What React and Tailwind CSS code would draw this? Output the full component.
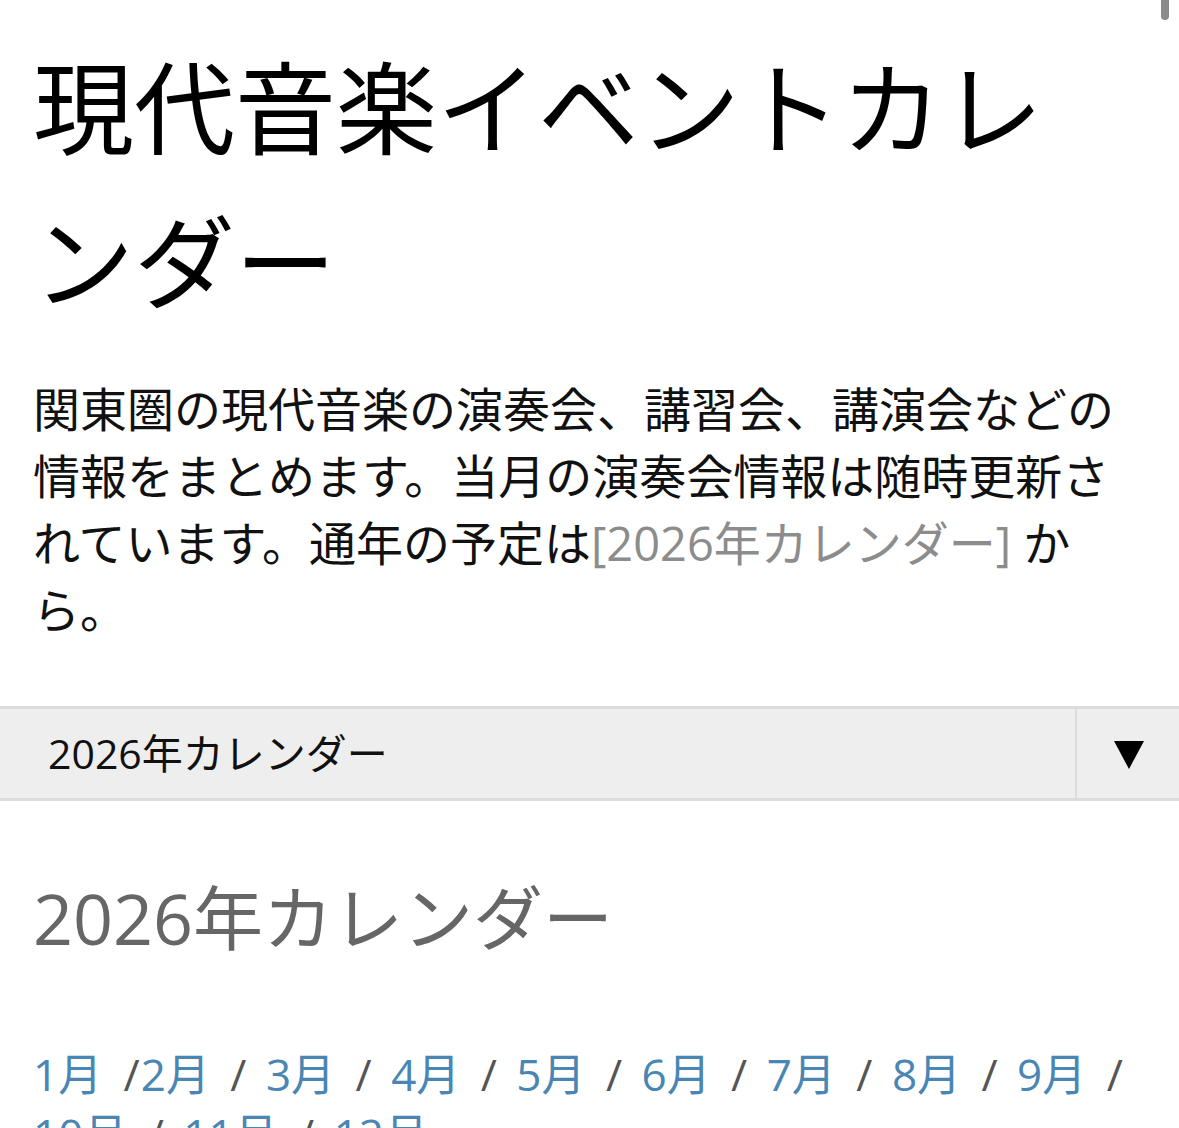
import React from "react";

const months = ["1月", "2月", "3月", "4月", "5月", "6月", "7月", "8月", "9月", "10月", "11月", "12月"];

const App = () => {
  return (
    <div
      className="relative min-h-screen bg-white text-black"
      style={{ fontFamily: '"Open Sans", "Noto Sans CJK JP", sans-serif' }}
    >
      {/* scroll indicator */}
      <div className="absolute right-[10px] top-0 h-[20px] w-[8px] rounded-b-full bg-[#8a8a8a]" />

      <div className="px-[33px] pt-[31px]">
        <h1 className="max-w-[1090px] text-[101px] leading-[154px] font-normal">
          現代音楽イベントカレンダー
        </h1>

        <p className="mt-[37px] text-[47px] leading-[67px] text-[#111]">
          関東圏の現代音楽の演奏会、講習会、講演会などの情報をまとめます。当月の演奏会情報は随時更新されています。通年の予定は
          <a href="#cal" className="text-[#8c8c8c]">[2026年カレンダー]</a> から。
        </p>
      </div>

      {/* year selector */}
      <div className="mt-[62px] flex h-[95px] border-y-[3px] border-[#dcdcdc] bg-[#eeeeee]">
        <div className="flex flex-1 items-center pl-[48px] text-[41px] text-[#111]">
          2026年カレンダー
        </div>
        <div className="flex w-[104px] items-center justify-center border-l-2 border-[#dcdcdc] pl-[2px]">
          <svg width="30" height="30" viewBox="0 0 30 30">
            <path d="M0 2 H30 L15 30 Z" fill="#000" />
          </svg>
        </div>
      </div>

      <div className="px-[33px]">
        <h2 id="cal" className="mt-[67px] text-[70px] leading-[100px] font-normal text-[#666666]">
          2026年カレンダー
        </h2>

        <div className="mt-[76px] text-[44px] leading-[60px] text-[#555]">
          {months.map((m, i) => (
            <React.Fragment key={m}>
              <a href="#" className="text-[#4a86b4]">{m}</a>
              {i === 0 && <span className="ml-[10px] mr-[1px]"> /</span>}
              {i > 0 && i < months.length - 1 && (
                <>
                  {" "}<span className="ml-[9px] mr-[8px]">/</span>{" "}
                </>
              )}
            </React.Fragment>
          ))}
        </div>
      </div>
    </div>
  );
};

export default App;
